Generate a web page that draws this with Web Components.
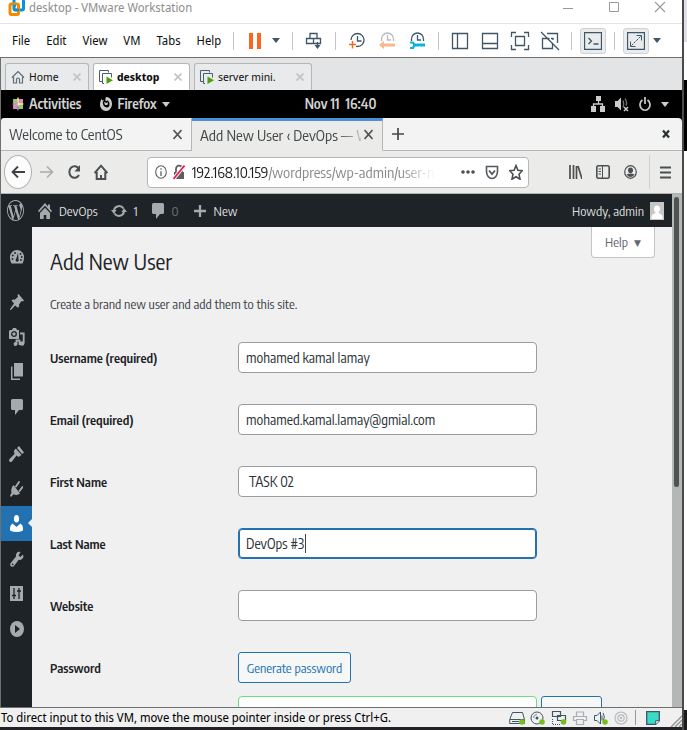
<!DOCTYPE html>
<html lang="en">
<head>
<meta charset="utf-8">
<title>desktop - VMware Workstation</title>
<style>
:root{
  --win-font:"Noto Sans Display","Noto Sans",sans-serif;
  --vm-font:"Encode Sans Condensed","Roboto Condensed","Noto Sans",sans-serif;
}
body{margin:0;height:100vh;overflow:hidden;background:#fff}
</style>
</head>
<body>
<vm-desktop></vm-desktop>
<script>
const define=(tag,css,html,after)=>customElements.define(tag,class extends HTMLElement{
  constructor(){super();this.attachShadow({mode:'open'})}
  connectedCallback(){
    if(this.shadowRoot.childNodes.length)return;
    const t=document.createElement('template');
    t.innerHTML=`<style>*{box-sizing:border-box}button{font:inherit;color:inherit;background:none;border:0;padding:0;margin:0}${css}</style>`+(typeof html==='function'?html(this):html);
    this.shadowRoot.append(t.content.cloneNode(true));
    if(after)after(this);
  }
});

/* viewBox size followed by the drawing */
const S='fill="none" stroke="#3f5666" stroke-width="1.3"';
const T='fill="none" stroke="#3f5666"';
const icons={
 vmware:['17 18',`<rect x="6" y="-3" width="9.500" height="13" rx="1.500" fill="none" stroke="#0e91d6" stroke-width="3"/><rect x="2" y="4" width="8.500" height="10.500" rx="1.500" fill="none" stroke="#f38b00" stroke-width="3"/><path d="M6.500 7V4.500M6.500 10H11" stroke="#0e91d6" stroke-width="2.500"/>`],
 min:['12 12','<path d="M1 7.500h10" stroke="#999"/>'],
 max:['12 12','<path d="M1.500 1.500h9v9h-9z" fill="none" stroke="#999"/>'],
 close:['12 12','<path d="M1 1l10 10M11 1L1 11" stroke="#999" stroke-width="1.100"/>'],
 pause:['12 16','<path d="M0 0h4v16H0zM8 0h4v16H8z" fill="#f9671f"/>'],
 caret:['8 5','<path d="M0 0h8L4 5z" fill="#3f5666"/>'],
 send:['18 18',`<path d="M5 6.500V1.500h7v5M1.500 6.500h14v5h-14zM8.500 6.500v5M12.500 10v6" ${S}/><path d="M9.500 13h6l-3 4z" fill="#3f5666"/>`],
 snap:['18 18',`<circle cx="9.500" cy="8" r="6.500" ${S}/><path d="M9.500 4v5h4" ${S}/><path d="M0 8h8v8H0z" fill="#fff"/><path d="M4.500 9v7.500M1 12.500h7" stroke="#f9671f" stroke-width="1.500"/>`],
 revert:['18 18','<path d="M3.500 9V7a6 6 0 0 1 12 0v2M9.500 3v5h3.500" fill="none" stroke="#b3bac0" stroke-width="1.300"/><path d="M1 13l5-4v2.500h11v3H6V17z" fill="#ffb48d"/>'],
 manage:['18 18',`<path d="M3.500 9V7a6 6 0 0 1 12 0v2M9.500 3v5h3.500" ${S}/><path d="M5 13h12" stroke="#08b4dd" stroke-width="3"/><path d="M2 10.500h3l1.500 2.500L5 16H2" fill="none" stroke="#08b4dd" stroke-width="2.200"/>`],
 lib:['18 18',`<path d="M1.500 1.500h15v15h-15zM6.500 1.500v15" ${S}/>`],
 thumb:['18 18',`<path d="M1.500 1.500h15v15h-15zM1.500 11.500h15" ${S}/>`],
 full:['20 20',`<path d="M1.500 6V1.500H6M14 1.500h4.500V6M18.500 14v4.500H14M6 18.500H1.500V14M5.500 5.500h9v9h-9z" ${S}/>`],
 unity:['20 20',`<path d="M7 2.500h10.500V12M9.500 7.500h-7v10h10v-5M11 7.500h2v1.500" ${S}/><path d="M1 1l18 18" stroke="#3f5666" stroke-width="1.200"/>`],
 term:['18 18',`<path d="M.500.500h17v17H.500z" ${S}/><path d="M4.500 6l3 3-3 3M9.500 12h5" ${S}/>`],
 stretch:['18 18',`<path d="M.500.500h17v17H.500z" ${S}/><path d="M9.500 3.500h5v5M8.500 14.500h-5v-5" ${T}/><path d="M13.500 4.500l-9 9" stroke="#3f5666" stroke-dasharray="2.500 1"/>`],
 vhome:['14 14','<path d="M1 7.500L7 1.500l6 6M2.500 7v6h3V9.500a1.500 1.500 0 0 1 3 0V13h3V7" fill="none" stroke="#5b6f7d" stroke-width="1.200"/>'],
 vm:['14 14','<path d="M3.500 11.500h-3v-11h9v2M5 13.500H3.500v-10h9v4" fill="none" stroke="#4c5f6d"/><path d="M7.500 6.500l6.500 3.700-6.500 3.700z" fill="#49a010"/>'],
 tclose:['8 8','<path d="M.500.500l7 7M7.500.500l-7 7" stroke="#c3c5c6" stroke-width="1.800"/>'],
 centos:['12 14','<path d="M6 0l2 3v3H4V3z" fill="#d9c35a"/><path d="M6 14l2-3V8H4v3z" fill="#6a62ad"/><path d="M0 7l3-2h3v4H3z" fill="#b96aa0"/><path d="M12 7L9 5H6v4h3z" fill="#e2cf6e"/><path d="M1 2h4v4H1zM11 12H7V8h4z" fill="#9cc468"/><path d="M11 2v4H7V2zM1 12V8h4v4z" fill="#d78dbd"/><path d="M6 2v10M1.500 7h9" stroke="#fff" stroke-width=".6"/>'],
 fox:['12 14','<path d="M6 0c4 0 6 3.500 6 7s-2.500 7-6 7S0 11 0 7.500C0 5 1 3 1.500 2l1 1.500L4 2.500C3 4 2.500 5.500 3 7c.5 2 2 3.500 4 3.500S9.500 9 9.500 7 8.500 4 7.500 3.500L5.500 4C5.200 2.500 5.500 1 6 0z" fill="#ccc"/><path d="M4 5l2.500 1L8 5l-.5 3H5z" fill="#ccc"/>'],
 gcaret:['8 5','<path d="M0 0h8L4 5z" fill="#ccc"/>'],
 net:['14 16','<path d="M5 0h5v5H5zM0 10h5v6H0zM9 10h5v6H9z" fill="#ccc"/><path d="M7.500 5v3M2.500 10V8h9v2" fill="none" stroke="#ccc" stroke-width="1.300"/>'],
 mute:['14 16','<path d="M0 5h2.500L6 1.500v13L2.500 11H0z" fill="#ccc"/><path d="M8 4.500q1.500 3.500 0 7M10 2.500q2.500 4 1 7" fill="none" stroke="#777" stroke-width="1.300"/><path d="M9 11l4 4M13 11l-4 4" stroke="#ccc" stroke-width="1.500"/>'],
 power:['12 15','<path d="M3.500 3a5 5.500 0 1 0 5 0M6 0v7" fill="none" stroke="#ccc" stroke-width="1.700"/>'],
 x:['9 11','<path d="M.500 1l8 9M8.500 1l-8 9" stroke="#51565a" stroke-width="1.700"/>'],
 xb:['8 10','<path d="M1 1.500l6 7M7 1.500l-6 7" stroke="#2e3436" stroke-width="2.300"/>'],
 plus:['14 14','<path d="M7 1v12M1 7h12" stroke="#44494c" stroke-width="1.700"/>'],
 back:['14 14','<path d="M14 7H1.500M7 1.500L1.500 7 7 12.500" fill="none" stroke="#3c4144" stroke-width="1.800"/>'],
 fwd:['14 14','<path d="M0 7h12.500M7 1.500L12.500 7 7 12.500" fill="none" stroke="#a9abac" stroke-width="1.500"/>'],
 reload:['14 16','<path d="M12 5A5.200 5.800 0 1 0 12 11" fill="none" stroke="#4a4f52" stroke-width="2"/><path d="M13 1v6.500H7.500z" fill="#4a4f52"/>'],
 home:['14 16','<path d="M.7 9L7 1.700 13.300 9M2.700 8v7h8.600V8M7 15v-4" fill="none" stroke="#4a4f52" stroke-width="2"/>'],
 info:['12 14','<ellipse cx="6" cy="7" rx="5.300" ry="6.300" fill="none" stroke="#5c6164" stroke-width="1.100"/><path d="M6 6.200V11M6 3.300v1.500" stroke="#5c6164" stroke-width="1.300"/>'],
 lock:['12 16','<path d="M1 8h10v7H1z" fill="#5b6064"/><path d="M3 8V5a3 3.300 0 0 1 6 0v3" fill="none" stroke="#5b6064" stroke-width="1.800"/><path d="M.500 15L11.500 1.500" stroke="#fff" stroke-width="3.500"/><path d="M.500 15L11.500 1.500" stroke="#f0144a" stroke-width="1.800"/>'],
 dots:['14 4','<circle cx="2" cy="2" r="1.800"/><circle cx="7" cy="2" r="1.800"/><circle cx="12" cy="2" r="1.800"/>'],
 pocket:['14 15','<path d="M1.500 1.500h11v5c0 4-2.500 7-5.500 7s-5.500-3-5.500-7z" fill="none" stroke="#55595c" stroke-width="1.600"/><path d="M4 5.500l3 3.500 3-3.500" fill="none" stroke="#55595c" stroke-width="1.800"/>'],
 star:['14 16','<path d="M7 1.500l1.900 4.700 4.400.5-3.300 3.500 1 5L7 12.700 3 15.200l1-5L.7 6.700l4.400-.5z" fill="none" stroke="#4a4f52" stroke-width="1.600"/>'],
 books:['13 14','<path d="M1 0v14M4.500 0v14M7.500 1v13M9 1l4 13" stroke="#4a4f52" stroke-width="1.700"/>'],
 side:['14 14','<rect x=".8" y=".8" width="12.400" height="12.400" rx="1.500" fill="none" stroke="#4a4f52" stroke-width="1.600"/><path d="M6.500 1v12" stroke="#4a4f52"/><path d="M2.500 4h2.500M2.500 6.500h2.500M2.500 9h2.500" stroke="#4a4f52"/>'],
 acct:['13 14','<ellipse cx="6.500" cy="7" rx="5.800" ry="6.300" fill="none" stroke="#4a4f52" stroke-width="1.200"/><ellipse cx="6.500" cy="5.300" rx="2.500" ry="2.800" fill="#4a4f52"/><path d="M2.500 9.500q4-2 8 0-4 5-8 0z" fill="#4a4f52"/>'],
 burger:['11 13','<path d="M0 1.500h11M0 6.500h11M0 11.500h11" stroke="#4a4f52" stroke-width="2"/>'],
 wp:['24 24','<path fill="#a7aaad" d="M21.469 6.825c.84 1.537 1.318 3.3 1.318 5.175 0 3.979-2.156 7.456-5.363 9.325l3.295-9.527c.615-1.54.82-2.771.82-3.864 0-.405-.026-.78-.07-1.11m-7.981.105c.647-.03 1.232-.105 1.232-.105.582-.075.514-.93-.067-.899 0 0-1.755.135-2.88.135-1.064 0-2.85-.15-2.85-.15-.585-.03-.661.855-.075.885 0 0 .54.061 1.125.09l1.68 4.605-2.37 7.08L5.354 6.9c.649-.03 1.234-.1 1.234-.1.585-.075.516-.93-.065-.896 0 0-1.746.138-2.874.138-.2 0-.438-.008-.69-.015C4.911 3.15 8.235 1.215 12 1.215c2.809 0 5.365 1.072 7.286 2.833-.046-.003-.091-.009-.141-.009-1.06 0-1.812.923-1.812 1.914 0 .89.513 1.643 1.06 2.531.411.72.89 1.643.89 2.977 0 .915-.354 1.994-.821 3.479l-1.075 3.585-3.9-11.61.001.014zM12 22.784c-1.059 0-2.081-.153-3.048-.437l3.237-9.406 3.315 9.087c.024.053.05.101.078.149-1.12.393-2.325.609-3.582.609M1.211 12c0-1.564.336-3.05.935-4.39L7.29 21.709C3.694 19.96 1.212 16.271 1.211 12M12 0C5.385 0 0 5.385 0 12s5.385 12 12 12 12-5.385 12-12S18.615 0 12 0"/>'],
 whome:['14 16','<path d="M7 0L0 8l1 1.300L7 2.800l6 6.500L14 8l-2-2.300V1.500h-2v2zM7 4.700L2 10v6h3.700v-4h2.600v4H12v-6z" fill="#a7aaad"/>'],
 sync:['16 14','<path d="M3 6a5.200 5 0 0 1 9.500-1.500M13 8a5.200 5 0 0 1-9.500 1.500" fill="none" stroke="#a7aaad" stroke-width="2"/><path d="M0 6h5.500L3 10zM10.500 8H16l-3-4z" fill="#a7aaad"/>'],
 bubble:['12 16','<path d="M1.500 0h9Q12 0 12 1.500v8Q12 11 10.500 11H8l-4 5v-5H1.500Q0 11 0 9.500v-8Q0 0 1.500 0z" fill="#a7aaad"/>'],
 wplus:['12 14','<path d="M6 1v12M0 7h12" stroke="#a7aaad" stroke-width="2.300"/>'],
 avatar:['14 18','<path d="M0 0h14v18H0z" fill="#c6c6c6"/><path d="M7 3.500c2 0 3 1.500 3 3.500 0 1.500-.7 2.500-1.500 3.200 0 1.500 3.500 1.800 4 3.800V17h-11v-3c.5-2 4-2.300 4-3.800C4.700 9.500 4 8.500 4 7c0-2 1-3.500 3-3.500z" fill="#fff"/>'],
 dash:['14 14','<path d="M7 0a7 7 0 0 1 7 7.500c0 3-1 5-1.500 6h-11C1 12.500 0 10.500 0 7.500A7 7 0 0 1 7 0z" fill="#a7aaad"/><path d="M6.200 9L8 3l.5 6.500a1.500 1.500 0 1 1-2.300-.5z" fill="#1d2327"/><g fill="#1d2327"><circle cx="5" cy="3" r=".9"/><circle cx="10.500" cy="4" r=".9"/><circle cx="2.800" cy="5.500" r=".9"/><circle cx="2.500" cy="9" r=".9"/><circle cx="11.800" cy="7" r=".9"/><circle cx="11" cy="10" r=".9"/></g>'],
 pin:['14 16','<path d="M8.500 0L14 6.500l-1.500 1-1-.5-2.500 3.500c.3 1.500 0 2.500-1 3.300L5 11.500 1 16l-1 0 .3-1.300L4 9.500 1.500 6.500c.8-1 2-1.200 3.300-.8L8 2.700 7.500 1z" fill="#a7aaad"/>'],
 media:['16 18','<path d="M1 2h2l1-2h3l1 2h2v9H0V3z" fill="#a7aaad"/><circle cx="5" cy="6" r="2.300" fill="none" stroke="#1d2327" stroke-width="1.300"/><path d="M11 5.500h3.700V15M7.500 16V12.500h3V17" fill="none" stroke="#a7aaad" stroke-width="1.800"/><ellipse cx="6.500" cy="16" rx="1.900" ry="2" fill="#a7aaad"/><ellipse cx="13" cy="15.500" rx="2.400" ry="2.300" fill="#a7aaad"/>'],
 pages:['12 17','<path d="M3 0h9v13.500H3z" fill="#a7aaad"/><path d="M.7 3.500v12.800H9" fill="none" stroke="#a7aaad" stroke-width="1.500"/>'],
 brush:['15 16','<path d="M8 2l2-2 5 6.500-2 1.500zM6.800 2.500L12.500 9 9.500 11 7.500 9.500 3 15.500Q1.500 16.500.500 15.500-.3 14.500.500 13L5.500 8 4.800 5z" fill="#a7aaad"/>'],
 plug:['13 16','<path d="M3.500 4l6.500 8.500c-2.500 1.700-4.500 2-6.500.7L1 16l-1-1.500 1.500-2.500C.8 9 1.500 6 3.500 4z" fill="#a7aaad"/><path d="M6 5.500L9 1M9.500 10L12.500 6" stroke="#a7aaad" stroke-width="1.900" stroke-linecap="round"/>'],
 user:['13 17','<ellipse cx="6.500" cy="3.800" rx="2.600" ry="3.800" fill="#fff"/><path d="M2.500 8.500L6.500 12l4-3.500Q13 10 13 13v2.500q-6.500 3-13 0V13q0-3 2.500-4.500z" fill="#fff"/>'],
 wrench:['14 16','<path d="M13 3.500L10.500 6 8.500 4.500 10.500 1C8 0 5.500 2 6 5.500L.7 12Q-.5 14 1 15.300 2.500 16.500 4 15L8.500 9C11.500 9.500 14.500 7 13 3.500z" fill="#a7aaad"/><circle cx="2.600" cy="13.300" r=".9" fill="#1d2327"/>'],
 slid:['13 15','<path d="M0 0h13v15H0z" fill="#a7aaad"/><path d="M4 2v11M9 2v11M2 9.500h4M7 5h4" stroke="#1d2327" stroke-width="1.300"/>'],
 play:['14 16','<ellipse cx="7" cy="8" rx="7" ry="8" fill="#a7aaad"/><path d="M5 4l5 4-5 4z" fill="#1d2327"/>'],
 disk:['16 14',`<path d="M3.500 1.500h10l2 7v4H.7v-4zM1 8.500h14M3 10.500h7" ${T}/><circle cx="13" cy="11" r="2.800" fill="#77be1d"/>`],
 cd:['16 14',`<circle cx="7" cy="7" r="6" ${T}/><circle cx="7" cy="7" r="1.500" fill="#3f5666"/><path d="M3.500 7A3.500 3.500 0 0 1 7 3.500" ${T} opacity=".6"/><circle cx="12" cy="11" r="2.800" fill="#77be1d"/>`],
 lan:['16 14','<path d="M1.500.500h8v5h-8zM6.500 4.500h8v5h-8z" fill="#eee" stroke="#3f5666" stroke-width="1.200"/><path d="M1.500 8v5.500H10" fill="none" stroke="#3f5666" stroke-dasharray="1 1"/><circle cx="12.500" cy="11" r="2.800" fill="#77be1d"/>'],
 prn:['16 14','<path d="M4.500 5V1h7v4M4 9.500H1.500v-4h13v4H12M4.500 8.500h7v5h-7z" fill="none" stroke="#a7afb5" stroke-width="1.200"/>'],
 snd:['16 14',`<path d="M1.500 4.500H4l3.500-3.500v12L4 9.500H1.500zM10 2q2.500 4 .5 7M9 4.500v5" ${T}/><circle cx="12" cy="11" r="2.800" fill="#77be1d"/>`],
 cam:['14 14','<circle cx="7" cy="7" r="6" fill="none" stroke="#b4babf" stroke-width="1.200"/><circle cx="7" cy="7" r="3.200" fill="none" stroke="#b4babf" stroke-width="1.200"/><circle cx="7" cy="7" r="1.200" fill="#b4babf"/>'],
 note:['14 14','<path d="M.700.700h12.600v9l-3.600 3.600h-9z" fill="#38dcc6" stroke="#3f5666" stroke-width="1.300"/><path d="M13.300 9.700H9.700v3.600" fill="#fff" stroke="#3f5666" stroke-width="1"/>'],
 grip:['12 12','<path d="M1 12L12 1M5 12l7-7M9 12l3-3" stroke="#999" stroke-width="1.500"/>']
};
define('ui-icon',`:host{display:block;flex:none}svg{display:block}`,el=>{
  const [box,art]=icons[el.getAttribute('name')];
  const [w,h]=box.split(' ');
  return `<svg width="${el.getAttribute('w')||w}" height="${el.getAttribute('h')||h}" viewBox="0 0 ${box}" preserveAspectRatio="none" fill="#4a4f52" aria-hidden="true">${art}</svg>`;
});
const I=(n,w,h)=>`<ui-icon name="${n}"${w?` w="${w}" h="${h}"`:''}></ui-icon>`;
const B=(label,icon,cls='')=>`<button type="button" class="${cls}" aria-label="${label}">${icon}</button>`;

define('vm-titlebar',`:host{display:flex;align-items:flex-start;height:24px;flex:none;background:#fff;border-bottom:1px solid #e3e3e3;padding-left:8px;font:12px/16px var(--win-font);color:#8f8f8f}
.t{margin-left:4px;flex:1}.c{display:flex;gap:34px;padding:1px 16px 0 0}`,
`${I('vmware')}<span class="t">desktop - VMware Workstation</span><div class="c">${B('Minimize',I('min'))}${B('Maximize',I('max'))}${B('Close',I('close'))}</div>`);

define('vm-menubar',`:host{display:flex;align-items:center;height:34px;flex:none;background:#fff;border-bottom:1px solid #6f6f6f;padding-left:12px;font:12px/16px var(--win-font);color:#111}
nav{display:flex;gap:16px;margin-right:6px}i{width:1px;height:18px;background:#c4c6c8;margin:0 6px;flex:none}
.k{width:30px;height:26px;display:grid;place-items:center;flex:none}.d{margin:0 6px 0 2px;flex:none}
.on{width:26px;height:26px;display:grid;place-items:center;flex:none;margin:0 2px;background:#e9ebec;border:1px solid #cfd2d4;border-radius:3px}`,
`<nav>${['File','Edit','View','VM','Tabs','Help'].map(x=>`<button type="button">${x}</button>`).join('')}</nav><i></i>
${B('Suspend',I('pause'),'k')}${B('Power menu',I('caret'),'d')}<i></i>${B('Send Ctrl+Alt+Del',I('send'),'k')}<i></i>${B('Take snapshot',I('snap'),'k')}${B('Revert',I('revert'),'k')}${B('Manage snapshots',I('manage'),'k')}<i></i>${B('Library',I('lib'),'k')}${B('Thumbnails',I('thumb'),'k')}${B('Full screen',I('full'),'k')}${B('Unity',I('unity'),'k')}<i></i>${B('Console',I('term'),'on')}<i></i>${B('Stretch',I('stretch'),'on')}${B('Stretch menu',I('caret'),'d')}`);

define('vm-tab',`:host{display:flex;align-items:center;height:27px;padding:0 7px 0 5px;background:#e9eaeb;border:1px solid #b4b6b8;border-bottom:0;border-radius:3px 3px 0 0;font:11px/14px var(--win-font);color:#111}
:host([active]){background:#fff;font-weight:700}span{flex:1;margin-left:4px;white-space:nowrap}`,
el=>`${I(el.getAttribute('icon'))}<span><slot></slot></span>${B('Close tab',I('tclose'))}`);
define('vm-tabs',`:host{display:flex;align-items:flex-end;gap:4px;height:32px;flex:none;background:#e2e4e5;padding-left:4px}
vm-tab:nth-child(2){width:84px}vm-tab:nth-child(3){width:97px}vm-tab:nth-child(4){width:118px}`,
`<vm-tab icon="vhome">Home</vm-tab><vm-tab icon="vm" active>desktop</vm-tab><vm-tab icon="vm">server mini.</vm-tab>`);

define('gnome-bar',`:host{display:grid;grid-template-columns:1fr auto 1fr;align-items:center;height:28px;flex:none;background:#000;color:#d2d2d2;font:600 14px/20px var(--vm-font);padding:0 13px 0 11px}
div{display:flex;align-items:center;gap:5px}.f{margin-left:14px;display:flex;align-items:center;gap:5px}.r{justify-content:flex-end;gap:10px}`,
`<div>${I('centos')}<button type="button">Activities</button><button type="button" class="f">${I('fox')}<span>Firefox</span>${I('gcaret')}</button></div><time>Nov 11&nbsp; 16:40</time><div class="r">${I('net')}${I('mute')}${I('power')}${I('gcaret')}</div>`);

define('ff-tab',`:host{display:flex;align-items:center;width:191px;height:33px;flex:0 1 auto;padding:0 9px 0 8px;border-right:1px solid #b6b7b7;border-bottom:1px solid #b6b7b7;box-sizing:border-box}
:host([active]){background:#ebebea;border-top:3px solid #4a90d9;padding-bottom:2px;border-bottom-color:#ebebea}
span{flex:1;white-space:nowrap;overflow:hidden;margin-right:3px;-webkit-mask:linear-gradient(90deg,#000 88%,transparent 104%);mask:linear-gradient(90deg,#000 88%,transparent 104%)}`,
`<span><slot></slot></span>${B('Close tab',I('x'))}`);
define('ff-tabs',`:host{display:flex;height:33px;flex:none;background:#f3f3f3;font:15px/20px var(--vm-font);color:#43484b;border-radius:3px 4px 0 0}
.e{flex:1;display:flex;align-items:center;justify-content:space-between;border-bottom:1px solid #b6b7b7;padding:0 12px 0 8px}`,
`<ff-tab>Welcome to CentOS</ff-tab><ff-tab active>Add New User ‹ DevOps — WordPress</ff-tab><div class="e">${B('New tab',I('plus'))}${B('Close window',I('xb'))}</div>`);

define('ff-nav',`:host{display:flex;align-items:center;height:43px;flex:none;background:#ebebea;border-bottom:1px solid #b0b1b1;padding:0 11px 0 3px}
.b{width:28px;height:34px;border-radius:50%;border:1px solid #b2b4b4;background:#fcfcfc;display:grid;place-items:center;flex:none}
.n{display:flex;gap:13px;margin:0 39px 0 8px}
.u{flex:1;min-width:0;height:31px;background:#fff;border:1px solid #b5b6b6;border-radius:4px;display:flex;align-items:center;gap:6px;padding:0 5px 0 7px}
.a{flex:1;min-width:0;overflow:hidden;white-space:nowrap;margin:0 20px 0 1px;font:15px/20px var(--vm-font);color:#888c8e;text-decoration:none;-webkit-mask:linear-gradient(90deg,#000 86%,transparent);mask:linear-gradient(90deg,#000 86%,transparent)}
.a b{font-weight:400;color:#1b1d1e}.o{display:flex;align-items:center;gap:10px}.r{display:flex;align-items:center;gap:14px;margin-left:40px}
i{width:1px;height:34px;background:#d0d1d1;margin:0 -4px 0 -2px}`,
`${B('Back',I('back'),'b')}<div class="n">${B('Forward',I('fwd'))}${B('Reload',I('reload'))}${B('Home',I('home'))}</div>
<div class="u">${I('info')}${I('lock')}<a class="a" href="#"><b>192.168.10.159</b>/wordpress/wp-admin/user-new.php</a><div class="o">${B('Page actions',I('dots'))}${B('Pocket',I('pocket'))}${B('Bookmark',I('star'))}</div></div>
<div class="r">${B('Library',I('books'))}${B('Sidebars',I('side'))}${B('Account',I('acct'))}<i></i>${B('Menu',I('burger'))}</div>`);

define('wp-bar',`:host{display:flex;align-items:center;height:33px;flex:none;background:#1d2327;color:#dcdcde;font:13px/20px var(--vm-font);padding:0 8px 0 6px}
a{display:flex;align-items:center;gap:7px;color:inherit;text-decoration:none}.h{margin-left:14px}.s{margin-left:13px}.z{margin-left:14px}.z span{color:#6d7276}.z,.n{gap:8px}.n{margin-left:15px}.u{margin-left:auto;gap:6px}`,
`<a href="#" aria-label="WordPress">${I('wp',17,21)}</a><a href="#" class="h">${I('whome')}<span>DevOps</span></a><a href="#" class="s">${I('sync')}<span>1</span></a><a href="#" class="z">${I('bubble')}<span>0</span></a><a href="#" class="n">${I('wplus')}<span>New</span></a><a href="#" class="u"><span>Howdy, admin</span>${I('avatar')}</a>`);

define('wp-menu',`:host{display:block;width:31px;flex:none;background:#1d2327;padding-top:12px}
a{display:grid;place-items:center;height:35px;position:relative}.g{margin-top:10px}.m{margin-top:12px}
.on{background:#2271b1}.on::after{content:"";position:absolute;right:0;top:13px;border:4px solid transparent;border-left:0;border-right-color:#f0f0f1}`,
[['dash'],['pin','g'],['media'],['pages'],['bubble'],['brush','m'],['plug'],['user','on'],['wrench'],['slid'],['play']].map(([n,c=''])=>`<a href="#" class="${c}" aria-label="${n}">${I(n)}</a>`).join(''));

define('form-row',`:host{display:flex;align-items:center;min-height:31px;font:14px/20px var(--vm-font);color:#2c3338}
label,.l{width:188px;flex:none;font-weight:600;font-size:13px;color:#1d2327}
.w{position:relative;flex:0 1 299px;min-width:0}
input{display:block;width:100%;height:31px;font:inherit;color:inherit;background:#fff;border:1px solid #9a9ca1;border-radius:4px;padding:0 7px;outline:0}
:host([focused]) input{border-color:#2271b1;box-shadow:0 0 0 1px #2271b1 inset}
.caret{position:absolute;top:6px;width:1px;height:19px;background:#444}`,
el=>{
  const l=el.getAttribute('label');
  if(el.hasAttribute('plain'))return `<span class="l">${l}</span><slot></slot>`;
  return `<label for="f">${l}</label><div class="w"><input id="f" type="${el.getAttribute('type')||'text'}" value="${el.getAttribute('value')||''}">${el.hasAttribute('focused')?'<span class="caret"></span>':''}</div>`;
},
el=>{
  const caret=el.shadowRoot.querySelector('.caret');
  if(!caret)return;
  const input=el.shadowRoot.querySelector('input'),c=document.createElement('canvas').getContext('2d'),s=getComputedStyle(input);
  c.font=`${s.fontSize} ${s.fontFamily}`;
  caret.style.left=Math.round(9+c.measureText(input.value).width)+'px';
});

define('wp-page',`:host{display:block;flex:1;min-width:0;overflow:hidden;background:#f0f0f1;padding:0 17px 0 18px;font:13px/20px var(--vm-font);color:#3c434a}
header{display:flex;justify-content:space-between;align-items:flex-start}h1{margin:18px 0 0;font-weight:400;font-size:22px;line-height:32px;color:#1d2327}
.help{width:64px;height:31px;background:#fff;border:1px solid #c3c4c7;border-top:0;border-radius:0 0 4px 4px;color:#646970}
.help small{font-size:9px;margin-left:6px;vertical-align:1px;font-family:"DejaVu Sans",sans-serif}
p{margin:17px 0 28px}form{display:grid;gap:31px}
.gen{height:31px;width:113px;border:1px solid #2271b1;border-radius:3px;background:#f6f7f7;color:#2271b1;font-size:13px}
.pw{display:flex;gap:4px;margin:-18px 0 0 188px}.pw input{flex:0 1 299px;min-width:0;height:36px;border:1px solid #68de7c;border-radius:4px;background:#fff;font:14px/20px var(--vm-font);padding:0 7px;color:#2c3338;outline:0}
.pw button{width:61px;height:36px;border:1px solid #2271b1;border-radius:3px;background:#f6f7f7;color:#2271b1}`,
`<header><h1>Add New User</h1><button type="button" class="help">Help<small>▼</small></button></header>
<p>Create a brand new user and add them to this site.</p>
<form>
<form-row label="Username (required)" value="mohamed kamal lamay"></form-row>
<form-row label="Email (required)" type="email" value="mohamed.kamal.lamay@gmial.com"></form-row>
<form-row label="First Name" value=" TASK 02"></form-row>
<form-row label="Last Name" value="DevOps #3" focused></form-row>
<form-row label="Website"></form-row>
<form-row label="Password" plain><button type="button" class="gen">Generate password</button></form-row>
<div class="pw"><input type="text" aria-label="New password"><button type="button" aria-label="Hide password"></button></div>
</form>`);

define('vm-status',`:host{display:flex;align-items:center;height:20px;flex:none;background:#f0f0f0;border-top:1px solid #6f6f6f;font:12px/16px var(--win-font);color:#000;padding:0 0 0 1px}
span{flex:1;white-space:nowrap}.g{display:flex;gap:5px}i{width:1px;height:15px;background:#999;margin:0 10px 0 7px}.e{margin-left:10px;align-self:flex-end}`,
`<span>To direct input to this VM, move the mouse pointer inside or press Ctrl+G.</span><div class="g">${['disk','cd','lan','prn','snd','cam'].map(n=>B(n,I(n))).join('')}</div><i></i>${B('Messages',I('note'))}<ui-icon class="e" name="grip"></ui-icon>`);

define('side-strip',`:host{display:grid;grid-template-rows:42px 38px 71px 1fr 20px;border-left:2px solid #4a4a4a;background:#fff}
b:nth-of-type(1){background:#dfe0e8}b:nth-of-type(3){background:#000}b:nth-of-type(5){background:#1c1c20}`,'<b></b><b></b><b></b><b></b><b></b>');

define('vm-desktop',`:host{display:grid;grid-template-columns:1fr 5px;height:100%}
.win{display:flex;flex-direction:column;min-width:0;height:100vh;background:#fff;border-bottom:3px solid #232126}
.guest{flex:1;min-height:0;display:flex;flex-direction:column;border-left:1px solid #6f6f6f;background:#000}
.body{flex:1;min-height:0;display:flex;background:#1d2327}.site{flex:1;min-width:0;display:flex;flex-direction:column}.cols{flex:1;min-height:0;display:flex}
.bar{width:10px;flex:none;background:#b3b7b6;padding:3px 3px 0 2px}.bar div{height:290px;border-radius:3px;background:#4d5454}
vm-tabs,gnome-bar,ff-tabs,ff-nav{min-width:0}`,
`<div class="win"><vm-titlebar></vm-titlebar><vm-menubar></vm-menubar><div class="guest"><vm-tabs></vm-tabs><gnome-bar></gnome-bar><ff-tabs></ff-tabs><ff-nav></ff-nav><div class="body"><div class="site"><wp-bar></wp-bar><div class="cols"><wp-menu></wp-menu><wp-page></wp-page></div></div><div class="bar"><div></div></div></div></div><vm-status></vm-status></div><side-strip></side-strip>`);
</script>
</body>
</html>
